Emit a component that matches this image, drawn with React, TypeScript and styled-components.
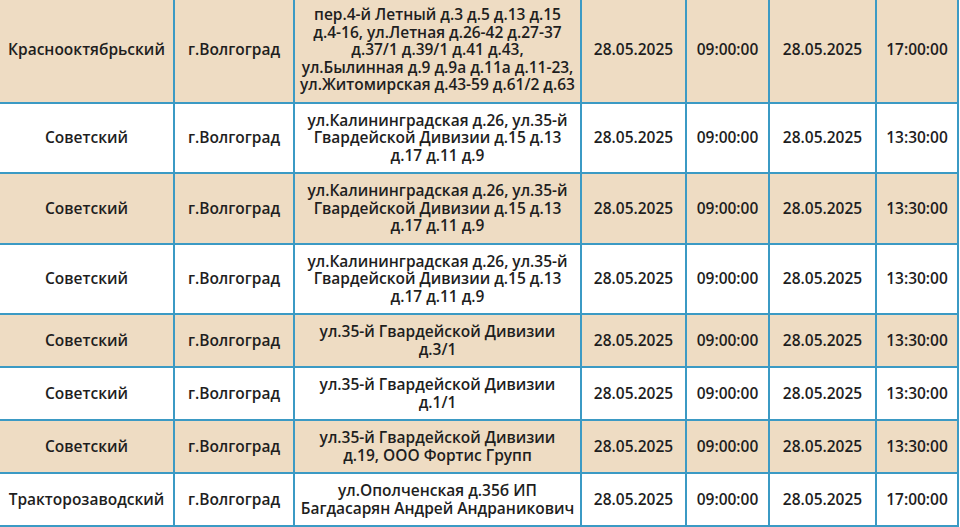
import React from 'react';
import styled, { createGlobalStyle } from 'styled-components';

const GlobalStyle = createGlobalStyle`
  html, body {
    margin: 0;
    padding: 0;
    background: #ffffff;
    overflow: hidden;
  }

  body {
    font-family: 'Open Sans', 'Noto Sans', 'DejaVu Sans', sans-serif;
  }
`;

const TableWrapper = styled.div`
  width: 960px;
  height: 527px;
  overflow: hidden;
`;

const Table = styled.table`
  width: 959px;
  margin: -4px 0 0 -2px;
  border-collapse: collapse;
  table-layout: fixed;
  font-size: 15.5px;
  font-weight: 600;
  line-height: 17.5px;
  color: #1e1e1e;
`;

const Row = styled.tr<{ $shaded: boolean }>`
  background: ${({ $shaded }) => ($shaded ? '#eedcc3' : '#ffffff')};
`;

const Cell = styled.td`
  border: 2px solid #3b9ac4;
  padding: 8px 4px 8px;
  text-align: center;
  vertical-align: middle;
  white-space: nowrap;
`;

type Outage = {
  district: string;
  city: string;
  address: string[];
  startDate: string;
  startTime: string;
  endDate: string;
  endTime: string;
};

const columns = [175, 120, 287, 105, 83, 107, 82];

const kalin = [
  'ул.Калининградская д.26, ул.35-й',
  'Гвардейской Дивизии д.15 д.13',
  'д.17 д.11 д.9',
];

const outages: Outage[] = [
  {
    district: 'Краснооктябрьский',
    city: 'г.Волгоград',
    address: [
      'пер.4-й Летный д.3 д.5 д.13 д.15',
      'д.4-16, ул.Летная д.26-42 д.27-37',
      'д.37/1 д.39/1 д.41 д.43,',
      'ул.Былинная д.9 д.9а д.11а д.11-23,',
      'ул.Житомирская д.43-59 д.61/2 д.63',
    ],
    startDate: '28.05.2025',
    startTime: '09:00:00',
    endDate: '28.05.2025',
    endTime: '17:00:00',
  },
  {
    district: 'Советский',
    city: 'г.Волгоград',
    address: kalin,
    startDate: '28.05.2025',
    startTime: '09:00:00',
    endDate: '28.05.2025',
    endTime: '13:30:00',
  },
  {
    district: 'Советский',
    city: 'г.Волгоград',
    address: kalin,
    startDate: '28.05.2025',
    startTime: '09:00:00',
    endDate: '28.05.2025',
    endTime: '13:30:00',
  },
  {
    district: 'Советский',
    city: 'г.Волгоград',
    address: kalin,
    startDate: '28.05.2025',
    startTime: '09:00:00',
    endDate: '28.05.2025',
    endTime: '13:30:00',
  },
  {
    district: 'Советский',
    city: 'г.Волгоград',
    address: ['ул.35-й Гвардейской Дивизии', 'д.3/1'],
    startDate: '28.05.2025',
    startTime: '09:00:00',
    endDate: '28.05.2025',
    endTime: '13:30:00',
  },
  {
    district: 'Советский',
    city: 'г.Волгоград',
    address: ['ул.35-й Гвардейской Дивизии', 'д.1/1'],
    startDate: '28.05.2025',
    startTime: '09:00:00',
    endDate: '28.05.2025',
    endTime: '13:30:00',
  },
  {
    district: 'Советский',
    city: 'г.Волгоград',
    address: ['ул.35-й Гвардейской Дивизии', 'д.19, ООО Фортис Групп'],
    startDate: '28.05.2025',
    startTime: '09:00:00',
    endDate: '28.05.2025',
    endTime: '13:30:00',
  },
  {
    district: 'Тракторозаводский',
    city: 'г.Волгоград',
    address: ['ул.Ополченская д.35б ИП', 'Багдасарян Андрей Андраникович'],
    startDate: '28.05.2025',
    startTime: '09:00:00',
    endDate: '28.05.2025',
    endTime: '17:00:00',
  },
];

const App = () => (
  <>
    <GlobalStyle />
    <TableWrapper>
      <Table>
        <colgroup>
          {columns.map((w, i) => (
            <col key={i} style={{ width: w }} />
          ))}
        </colgroup>
        <tbody>
          {outages.map((o, i) => (
            <Row key={i} $shaded={i % 2 === 0}>
              <Cell>{o.district}</Cell>
              <Cell>{o.city}</Cell>
              <Cell>
                {o.address.map((line, j) => (
                  <React.Fragment key={j}>
                    {j > 0 && <br />}
                    {line}
                  </React.Fragment>
                ))}
              </Cell>
              <Cell>{o.startDate}</Cell>
              <Cell>{o.startTime}</Cell>
              <Cell>{o.endDate}</Cell>
              <Cell>{o.endTime}</Cell>
            </Row>
          ))}
        </tbody>
      </Table>
    </TableWrapper>
  </>
);

export default App;
